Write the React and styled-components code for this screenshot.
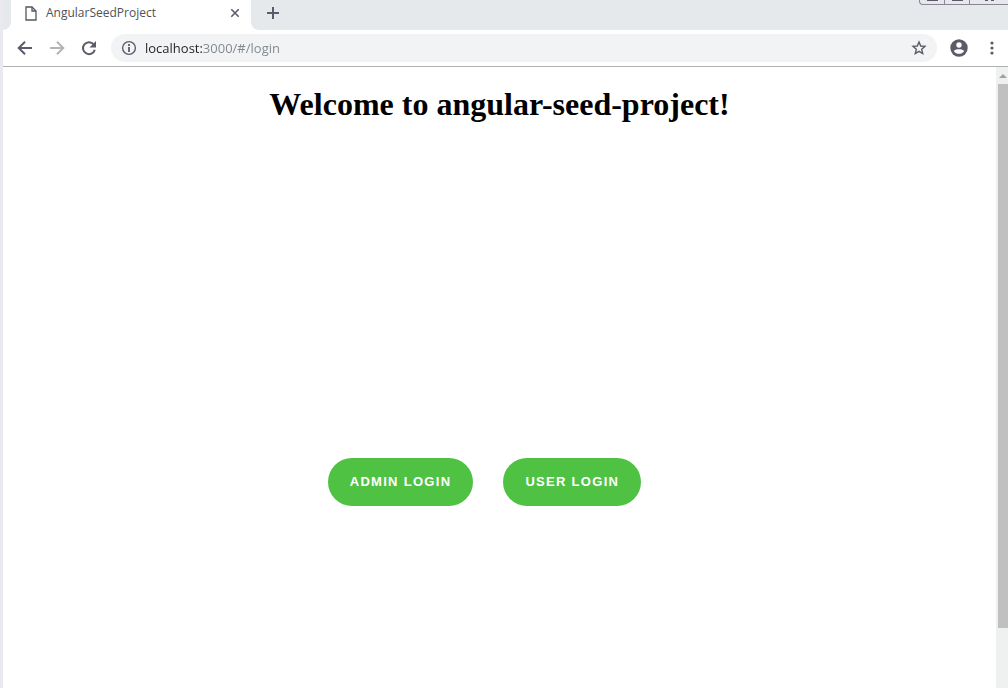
import React, { useState } from "react";
import styled, { createGlobalStyle } from "styled-components";

const GlobalStyle = createGlobalStyle`
  *, *::before, *::after { box-sizing: border-box; }
  html, body { margin: 0; background: #fff; }
  button { font: inherit; color: inherit; border: 0; padding: 0; background: none; cursor: pointer; }
  svg { display: block; }
`;

const strip = "#e6e9ec";
const ink = "#5a5c69";

const Browser = styled.div`
  display: flex;
  flex-direction: column;
  min-height: 100vh;
  border-left: 3px solid #e8eaef;
  font-family: "Open Sans", "Noto Sans", sans-serif;
  color: ${ink};
`;

const TabStrip = styled.header`
  display: flex;
  align-items: flex-start;
  height: 30px;
  background: #fff;
`;

const StripEdge = styled.div`
  width: 8px;
  height: 30px;
  background: ${strip};
  border-bottom-right-radius: 8px;
`;

const Tab = styled.div`
  display: flex;
  align-items: center;
  width: 240px;
  height: 26px;
  padding: 0 8px 0 14px;
  background: #fff;
`;

const TabButton = styled.button`
  display: flex;
  flex: 1;
  align-items: center;
  gap: 9px;
  font-size: 12px;
  line-height: 16px;
  color: #4e5158;
`;

const IconButton = styled.button`
  display: flex;
  align-items: center;
  justify-content: center;
  width: ${(p) => p.$size}px;
  height: ${(p) => p.$size}px;
  color: ${(p) => (p.disabled ? "#b4b4b6" : ink)};
`;

const StripRest = styled.div`
  display: flex;
  flex: 1;
  justify-content: space-between;
  height: 30px;
  padding-left: 12px;
  background: ${strip};
  border-bottom-left-radius: 8px;
`;

const NewTab = styled(IconButton)`
  height: 26px;
`;

const WindowControls = styled.div`
  display: flex;
  height: 5px;
  overflow: hidden;
  border: solid #8d8497;
  border-width: 0 0 1px 1px;
  border-bottom-left-radius: 4px;
`;

const WindowButton = styled.button`
  display: flex;
  justify-content: center;
  width: ${(p) => p.$width}px;
  border-left: ${(p) => (p.$divided ? "1px solid #8d8497" : "0")};
`;

const Toolbar = styled.nav`
  display: flex;
  align-items: center;
  height: 37px;
  padding: 0 4px 0 10px;
  border-bottom: 1px solid #b0b0b2;
`;

const NavButtons = styled.div`
  display: flex;
  gap: 8px;
  margin-right: 10px;
`;

const AddressBar = styled.form`
  display: flex;
  flex: 1;
  align-items: center;
  gap: 4px;
  height: 28px;
  padding: 0 6px;
  background: #f1f3f4;
  border-radius: 14px;
`;

const AddressInput = styled.input`
  flex: 1;
  min-width: 0;
  height: 20px;
  padding: 0;
  border: 0;
  outline: 0;
  font: 13px/20px "Open Sans", "Noto Sans", sans-serif;
  color: transparent;
  caret-color: #202124;
  background: linear-gradient(to right, #202124 58px, #80868b 58px);
  background-clip: text;
  -webkit-background-clip: text;
`;

const ToolbarEnd = styled.div`
  display: flex;
  align-items: center;
  gap: 9px;
  margin-left: 10px;
`;

const Viewport = styled.div`
  display: flex;
  flex: 1;
`;

const Page = styled.main`
  flex: 1;
  display: flex;
  flex-direction: column;
  align-items: center;
  gap: 335px;
  padding-top: 19px;
`;

const Title = styled.h1`
  margin: 0;
  font: bold 32px/37px "Liberation Serif", "Times New Roman", serif;
  color: #000;
`;

const Actions = styled.div`
  display: flex;
`;

const LoginButton = styled.button`
  height: 48px;
  margin-right: 30px;
  padding: 0 22px;
  border-radius: 24px;
  background: #50c243;
  color: #fff;
  font: bold 13px/16px "Liberation Sans", Arial, sans-serif;
  letter-spacing: 0.1em;
  text-transform: uppercase;
`;

const Scrollbar = styled.div`
  display: flex;
  flex-direction: column;
  width: 12px;
  padding-left: 2px;
  background: #eff1f1;
`;

const ScrollUp = styled.button`
  height: 17px;
  display: flex;
  align-items: center;
  justify-content: center;
  color: #a0a0a8;
`;

const ScrollThumb = styled.div`
  flex: 9;
  background: #c0c0c0;
`;

const ScrollRest = styled.div`
  flex: 1;
`;

const FileIcon = () => (
  <svg width="12" height="15" viewBox="0 0 12 15" fill="none" stroke="#55565e" strokeWidth="1.3">
    <path d="M1 1h6l4 4v9H1z" />
    <path d="M7 1v4h4" />
  </svg>
);

const CloseIcon = () => (
  <svg width="10" height="10" viewBox="0 0 10 10" fill="none" stroke="currentColor" strokeWidth="1.6">
    <path d="M1.3 1.3l7.4 7.4M8.7 1.3L1.3 8.7" />
  </svg>
);

const PlusIcon = () => (
  <svg width="12" height="12" viewBox="0 0 12 12" fill="none" stroke="currentColor" strokeWidth="2">
    <path d="M6 0v12M0 6h12" />
  </svg>
);

const ArrowIcon = ({ forward }) => (
  <svg width="16" height="16" viewBox="0 0 16 16" fill="none" stroke="currentColor" strokeWidth="2">
    <path d={forward ? "M1 8h13M8 1.7L14.3 8 8 14.3" : "M15 8H2M8 1.7L1.7 8 8 14.3"} />
  </svg>
);

const ReloadIcon = () => (
  <svg width="16" height="16" viewBox="0 0 16 16">
    <path d="M12.7 4.4A6 6 0 1 0 13.8 9.7" fill="none" stroke="currentColor" strokeWidth="2" />
    <path d="M15 1v6.5H8.5z" fill="currentColor" />
  </svg>
);

const InfoIcon = () => (
  <svg width="16" height="16" viewBox="0 0 16 16" fill="none" stroke="currentColor">
    <circle cx="8" cy="8" r="6.4" strokeWidth="1.4" />
    <path d="M8 4v2M8 7v5" strokeWidth="1.8" />
  </svg>
);

const StarIcon = () => (
  <svg width="16" height="16" viewBox="0 0 16 16" fill="none" stroke="currentColor" strokeWidth="1.4">
    <path d="M8 2l1.7 4 4.3.4-3.3 2.9 1 4.2L8 11.3l-3.7 2.2 1-4.2L2 6.4 6.3 6z" />
  </svg>
);

const ProfileIcon = () => (
  <svg width="18" height="18" viewBox="0 0 18 18">
    <circle cx="9" cy="9" r="8.7" fill="currentColor" />
    <circle cx="9" cy="6" r="2.7" fill="#fff" />
    <path d="M3.9 12.2C4.9 9.6 13.1 9.6 14.1 12.2 11.8 15.6 6.2 15.6 3.9 12.2z" fill="#fff" />
  </svg>
);

const MenuIcon = () => (
  <svg width="4" height="14" viewBox="0 0 4 14" fill="currentColor">
    <circle cx="2" cy="2" r="1.6" />
    <circle cx="2" cy="7" r="1.6" />
    <circle cx="2" cy="12" r="1.6" />
  </svg>
);

const ControlMark = ({ split }) => (
  <svg width="11" height="2" viewBox="0 0 11 2" fill="#5d5967">
    {split ? <path d="M1 0h3v1H1zM7 0h3v1H7z" /> : <path d="M0 0h11v1H0z" />}
  </svg>
);

export default function App() {
  const [address, setAddress] = useState("localhost:3000/#/login");
  return (
    <>
      <GlobalStyle />
      <Browser>
        <TabStrip>
          <StripEdge />
          <Tab>
            <TabButton type="button">
              <FileIcon />
              AngularSeedProject
            </TabButton>
            <IconButton type="button" $size={16} aria-label="Close tab"><CloseIcon /></IconButton>
          </Tab>
          <StripRest>
            <NewTab type="button" $size={20} aria-label="New tab"><PlusIcon /></NewTab>
            <WindowControls>
              <WindowButton type="button" $width={24} aria-label="Minimize"><ControlMark /></WindowButton>
              <WindowButton type="button" $width={25} $divided aria-label="Maximize"><ControlMark /></WindowButton>
              <WindowButton type="button" $width={39} $divided aria-label="Close window"><ControlMark split /></WindowButton>
            </WindowControls>
          </StripRest>
        </TabStrip>
        <Toolbar aria-label="Browser">
          <NavButtons>
            <IconButton type="button" $size={24} aria-label="Back"><ArrowIcon /></IconButton>
            <IconButton type="button" $size={24} disabled aria-label="Forward"><ArrowIcon forward /></IconButton>
            <IconButton type="button" $size={24} aria-label="Reload"><ReloadIcon /></IconButton>
          </NavButtons>
          <AddressBar onSubmit={(e) => e.preventDefault()}>
            <IconButton type="button" $size={24} aria-label="Site information"><InfoIcon /></IconButton>
            <AddressInput
              aria-label="Address"
              spellCheck={false}
              value={address}
              onChange={(e) => setAddress(e.target.value)}
            />
            <IconButton type="button" $size={24} aria-label="Bookmark this page"><StarIcon /></IconButton>
          </AddressBar>
          <ToolbarEnd>
            <IconButton type="button" $size={24} aria-label="Profile"><ProfileIcon /></IconButton>
            <IconButton type="button" $size={24} aria-label="Menu"><MenuIcon /></IconButton>
          </ToolbarEnd>
        </Toolbar>
        <Viewport>
          <Page>
            <Title>Welcome to angular-seed-project!</Title>
            <Actions>
              <LoginButton type="button">Admin Login</LoginButton>
              <LoginButton type="button">User Login</LoginButton>
            </Actions>
          </Page>
          <Scrollbar>
            <ScrollUp type="button" aria-label="Scroll up">
              <svg width="8" height="4" viewBox="0 0 8 4" fill="currentColor"><path d="M4 0l4 4H0z" /></svg>
            </ScrollUp>
            <ScrollThumb />
            <ScrollRest />
          </Scrollbar>
        </Viewport>
      </Browser>
    </>
  );
}
